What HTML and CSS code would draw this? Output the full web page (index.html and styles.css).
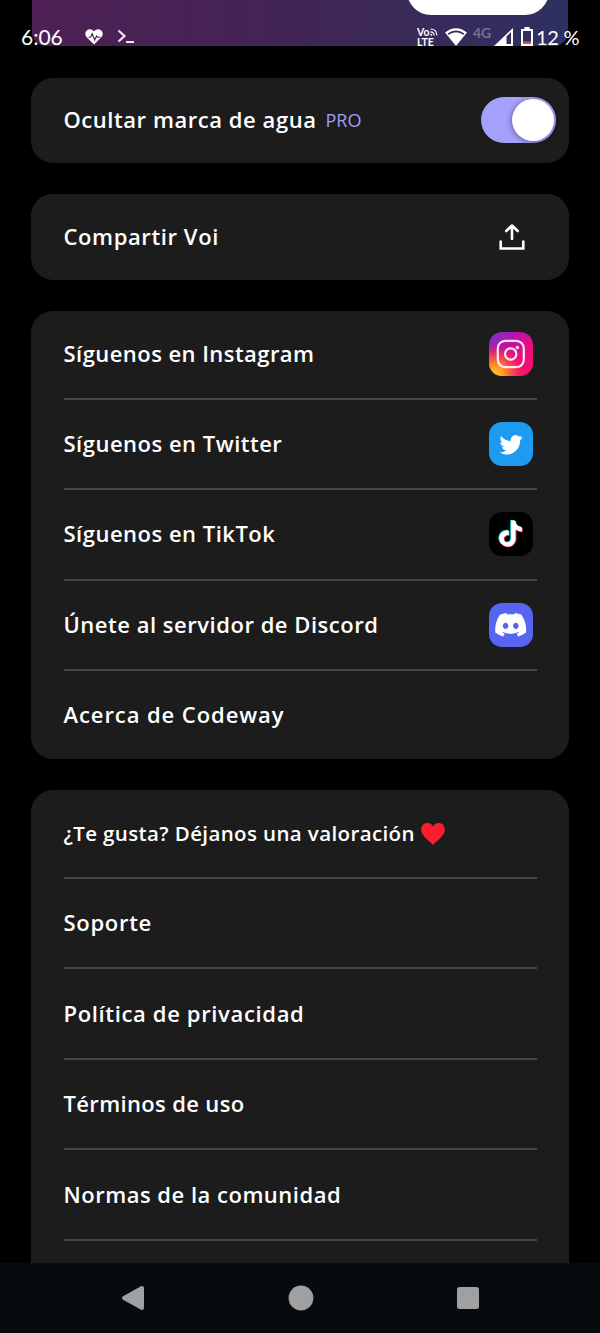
FILE: index.html
```html
<!DOCTYPE html>
<html lang="es">
<head>
<meta charset="utf-8">
<title>Ajustes</title>
<link rel="stylesheet" href="styles.css">
</head>
<body>
<div class="screen">
  <header class="status">
    <span class="clock">6:06</span>
    <svg class="heart-rate" width="18" height="16" viewBox="0 0 18 16"><path fill="#fff" d="M9 15.5 1.500 8C-.3 5.800 0 3 1.800 1.400 4-.4 7 0 9 2.400c2-2.400 5-2.800 7.200-1C18 3 18.300 5.800 16.500 8z"/><path fill="none" stroke="#48204f" stroke-width="1.100" d="M3.500 8.200h2l1.700-3.500 2.500 6.300 1.800-4 1 1.200h3"/></svg>
    <svg class="prompt" width="18" height="15" viewBox="0 0 18 15"><path fill="none" stroke="#f3e6f5" stroke-width="2.200" d="m1.500 1.500 6 5.500-6 5.500M9 13h8"/></svg>
    <div class="status-right">
      <span class="volte"><span class="vo">Vo<svg width="8" height="8" viewBox="0 0 8 8"><path fill="none" stroke="#fff" stroke-width="1.200" d="M.5 1Q6.500 1 7 7.500M.5 3.800Q4 4 4.300 7.500"/><circle cx="1.300" cy="6.800" r="1" fill="#fff"/></svg></span><span>LTE</span></span>
      <svg class="wifi" width="22" height="18" viewBox="0 0 22 18"><path fill="#fff" d="M0 4.500Q11-4 22 4.500L11 18z"/><path fill="none" stroke="#3c2859" stroke-width="1.600" d="M3 6.200q8-5.600 16 0"/></svg>
      <span class="net">4G</span>
      <svg class="signal" width="19" height="18" viewBox="0 0 19 18"><path fill="#fff" d="M19 0v18H0z"/><path fill="#343059" d="M12.500 8.500 17 4v12h-4.500z"/></svg>
      <svg class="battery" width="12" height="19" viewBox="0 0 12 19"><path fill="#fff" d="M3.500 0h5v2H12v17H0V2h3.500z"/><path fill="#343059" d="M2 4h8v11H2z"/><path fill="#d5524e" d="M2 14.500h8V17H2z"/></svg>
      <span class="percent">12 %</span>
    </div>
  </header>

  <main class="content">
    <section class="banner"><div class="banner-button"></div></section>

    <section class="card single">
      <span class="label l-hide">Ocultar marca de agua</span><span class="pro">PRO</span>
      <div class="toggle"><div class="knob"></div></div>
    </section>

    <section class="card single">
      <span class="label l-share">Compartir Voi</span>
      <svg class="share" width="26" height="26" viewBox="0 0 26 26"><path fill="none" stroke="#fff" stroke-width="2.600" stroke-linecap="round" stroke-linejoin="round" d="M13 15V2M7.300 7 13 1.500 18.700 7"/><path fill="none" stroke="#fff" stroke-width="2.600" stroke-linecap="round" d="M1.700 17.500v7h22.600v-7"/></svg>
    </section>

    <section class="card list">
      <div class="row"><span class="label l-insta">Síguenos en Instagram</span>
        <svg class="app" viewBox="0 0 44 44"><defs>
          <linearGradient id="ig" x1="0" y1="0" x2="1" y2="1"><stop offset="0" stop-color="#7038d0"/><stop offset=".32" stop-color="#b414ae"/><stop offset=".65" stop-color="#f00a80"/><stop offset="1" stop-color="#f51467"/></linearGradient>
          <radialGradient id="igw" cx=".12" cy="1" r=".75"><stop offset="0" stop-color="#ffd02e"/><stop offset=".3" stop-color="#ff9b20"/><stop offset=".65" stop-color="#ff4546" stop-opacity=".75"/><stop offset="1" stop-color="#ff1060" stop-opacity="0"/></radialGradient></defs>
          <rect width="44" height="44" rx="13" fill="url(#ig)"/><rect width="44" height="44" rx="13" fill="url(#igw)"/>
          <g fill="none" stroke="#ffe9f5" stroke-width="2.200"><rect x="8.800" y="8.900" width="26" height="26.200" rx="7.500"/><circle cx="21.700" cy="22" r="5.700"/></g><circle cx="28.400" cy="15.500" r="1.700" fill="#ffe9f5"/></svg>
      </div>
      <div class="row"><span class="label l-twitter">Síguenos en Twitter</span>
        <svg class="app" viewBox="0 0 44 44"><rect width="44" height="44" rx="13" fill="#1d9bf0"/><path transform="translate(10.500 10.800) scale(.96 1)" fill="#fff" d="M23.953 4.570a10 10 0 01-2.825.775 4.958 4.958 0 002.163-2.723c-.951.555-2.005.959-3.127 1.184a4.920 4.920 0 00-8.384 4.482C7.690 8.095 4.067 6.130 1.640 3.162a4.822 4.822 0 00-.666 2.475c0 1.710.870 3.213 2.188 4.096a4.904 4.904 0 01-2.228-.616v.060a4.923 4.923 0 003.946 4.827 4.996 4.996 0 01-2.212.085 4.936 4.936 0 004.604 3.417 9.867 9.867 0 01-6.102 2.105c-.390 0-.779-.023-1.170-.067a13.995 13.995 0 007.557 2.209c9.053 0 13.998-7.496 13.998-13.985 0-.210 0-.420-.015-.630A9.935 9.935 0 0024 4.590z"/></svg>
      </div>
      <div class="row"><span class="label l-tiktok">Síguenos en TikTok</span>
        <svg class="app" viewBox="0 0 44 44"><defs><path id="note" d="M12.525.020c1.310-.020 2.610-.010 3.910-.020.080 1.530.630 3.090 1.750 4.170 1.120 1.110 2.700 1.620 4.240 1.790v4.030c-1.440-.050-2.890-.350-4.200-.970-.570-.260-1.100-.590-1.620-.930-.010 2.920.010 5.840-.020 8.750-.080 1.400-.540 2.790-1.350 3.940-1.310 1.920-3.580 3.170-5.910 3.210-1.430.080-2.860-.310-4.080-1.030-2.020-1.190-3.440-3.370-3.650-5.710-.020-.500-.030-1-.010-1.490.180-1.900 1.120-3.720 2.580-4.960 1.660-1.440 3.980-2.130 6.150-1.720.020 1.480-.040 2.960-.040 4.440-.990-.320-2.150-.230-3.020.370-.630.410-1.110 1.040-1.360 1.750-.210.510-.150 1.070-.140 1.610.240 1.640 1.820 3.020 3.500 2.870 1.120-.010 2.190-.660 2.770-1.610.190-.330.400-.670.410-1.060.100-1.790.060-3.570.070-5.360.010-4.030-.010-8.050.020-12.070z"/></defs>
          <rect width="44" height="44" rx="13" fill="#000"/>
          <use href="#note" transform="translate(7.800 8) scale(1.080)" fill="#25f4ee"/><use href="#note" transform="translate(9.500 9.400) scale(1.080)" fill="#fe2c55"/><use href="#note" transform="translate(8.700 8.700) scale(1.080)" fill="#fff"/></svg>
      </div>
      <div class="row"><span class="label l-discord">Únete al servidor de Discord</span>
        <svg class="app" viewBox="0 0 44 44"><rect width="44" height="44" rx="13" fill="#5865f2"/><g transform="translate(6.200 6.200) scale(1.290)" fill="#fff"><path d="M20.317 4.3698a19.7913 19.7913 0 00-4.8851-1.5152.0741.0741 0 00-.0785.0371c-.211.3753-.4447.8648-.6083 1.2495-1.8447-.2762-3.68-.2762-5.4868 0-.1636-.3933-.4058-.8742-.6177-1.2495a.077.077 0 00-.0785-.037 19.7363 19.7363 0 00-4.8852 1.515.0699.0699 0 00-.0321.0277C.5334 9.0458-.319 13.5799.0992 18.0578a.0824.0824 0 00.0312.0561c2.0528 1.5076 4.0413 2.4228 5.9929 3.0294a.0777.0777 0 00.0842-.0276c.4616-.6304.8731-1.2952 1.226-1.9942a.076.076 0 00-.0416-.1057c-.6528-.2476-1.2743-.5495-1.8722-.8923a.077.077 0 01-.0076-.1277c.1258-.0943.2517-.1923.3718-.2914a.0743.0743 0 01.0776-.0105c3.9278 1.7933 8.18 1.7933 12.0614 0a.0739.0739 0 01.0785.0095c.1202.099.246.1981.3728.2924a.077.077 0 01-.0066.1276 12.2986 12.2986 0 01-1.873.8914.0766.0766 0 00-.0407.1067c.3604.698.7719 1.3628 1.225 1.9932a.076.076 0 00.0842.0286c1.961-.6067 3.9495-1.5219 6.0023-3.0294a.077.077 0 00.0313-.0552c.5004-5.177-.8382-9.6739-3.5485-13.6604a.061.061 0 00-.0312-.0286zM8.02 15.3312c-1.1825 0-2.1569-1.0857-2.1569-2.419 0-1.3332.9555-2.4189 2.157-2.4189 1.2108 0 2.1757 1.0952 2.1568 2.419 0 1.3332-.9555 2.4189-2.1569 2.4189zm7.9748 0c-1.1825 0-2.1569-1.0857-2.1569-2.419 0-1.3332.9554-2.4189 2.1569-2.4189 1.2108 0 2.1757 1.0952 2.1568 2.419 0 1.3332-.946 2.4189-2.1568 2.4189Z"/></g></svg>
      </div>
      <div class="row"><span class="label l-about">Acerca de Codeway</span></div>
    </section>

    <section class="card list more">
      <div class="row"><span class="label small l-rate">¿Te gusta? Déjanos una valoración</span><svg class="heart" width="24" height="22" viewBox="0 0 24 22"><path fill="#fb1f2d" d="M12 22C9.500 19 1.500 13.500.400 8.500-.600 3.500 2.500.100 6.300.100 9 .100 11 1.500 12 3.700 13 1.500 15 .100 17.700.100c3.800 0 6.900 3.400 5.900 8.400C22.500 13.500 14.500 19 12 22z"/></svg></div>
      <div class="row"><span class="label l-support">Soporte</span></div>
      <div class="row"><span class="label l-privacy">Política de privacidad</span></div>
      <div class="row"><span class="label l-terms">Términos de uso</span></div>
      <div class="row"><span class="label l-rules">Normas de la comunidad</span></div>
      <div class="row"></div>
    </section>
  </main>

  <nav class="navbar">
    <svg width="24" height="26" viewBox="0 0 24 26"><path fill="#9fa0a1" stroke="#9fa0a1" stroke-width="4" stroke-linejoin="round" d="M21 3v20L3 13z"/></svg>
    <svg width="26" height="26" viewBox="0 0 26 26"><circle cx="13" cy="13" r="12.400" fill="#9fa0a1"/></svg>
    <svg width="24" height="24" viewBox="0 0 24 24"><rect x="1" y="1" width="22" height="22" rx="2.500" fill="#9fa0a1"/></svg>
  </nav>
</div>
</body>
</html>
```

FILE: styles.css
```css
* { box-sizing: border-box; }
body { margin: 0; background: #000; color: #fff; font-family: "Open Sans", "Noto Sans", sans-serif; }
svg { display: block; flex: none; }
.screen { position: relative; display: flex; flex-direction: column; width: 600px; height: 1333px; overflow: hidden; }

.status { position: absolute; z-index: 2; top: 0; left: 0; display: flex; align-items: center; width: 600px; height: 73px; padding: 0 22px 0 21px; font-family: Lato, sans-serif; font-size: 20px; line-height: 24px; }
.clock { width: 64px; font-size: 21px; }
.prompt { margin-left: 14px; }
.status-right { display: flex; align-items: center; margin-left: auto; }
.volte { display: flex; flex-direction: column; width: 28px; font-size: 10.5px; font-weight: 700; line-height: 10px; }
.vo { display: flex; align-items: center; }
.net { width: 27px; padding-left: 6px; margin-top: -8px; color: #77708f; font-size: 14px; font-weight: 700; line-height: 16px; }
.signal { margin-right: 8px; }
.percent { width: 42px; margin-left: 3px; letter-spacing: -.3px; white-space: nowrap; }

.content { flex: 1; min-height: 0; overflow: hidden; padding: 0 31px; }
.banner { display: flex; justify-content: flex-end; align-items: flex-end; height: 46px; margin: 0 1px 31.5px; padding: 0 19px 31px 0; border-radius: 0 0 14px 14px; background: linear-gradient(90deg, #4f2055, #412554 50%, #2e3061); }
.banner-button { flex: none; width: 142px; height: 48px; border-radius: 24px; background: #fff; }

.card { margin-bottom: 31.3px; padding: 0 32px 0 32.5px; border-radius: 22px; background: #1c1c1c; }
.single { display: flex; align-items: center; height: 85.5px; }
.label { padding-bottom: 2px; font-size: 22px; font-weight: 650; line-height: 30px; letter-spacing: .5px; white-space: nowrap; }
.small { padding-bottom: 1px; font-size: 20.5px; }
.pro { margin-left: 8px; color: #a39df5; font-size: 18px; line-height: 24px; }
.toggle { display: flex; justify-content: flex-end; align-items: center; width: 75px; height: 46px; margin: 0 -18.5px 0 auto; padding-right: 2px; border-radius: 23px; background: #a5a0fb; }
.knob { width: 42px; height: 42px; border-radius: 50%; background: #fff; box-shadow: -1px 1px 5px rgba(30, 20, 80, .45); }
.share { margin: 0 12.5px 0 auto; }

.row { display: flex; align-items: center; height: 90.5px; border-bottom: 2px solid #464648; }
.row:first-child { height: 88.5px; }
.row:last-child { height: 88px; border-bottom: 0; }
.app { width: 44px; height: 44px; margin: 0 4px 0 auto; }
.heart { margin-left: 6px; }

.l-hide { width: 254px; letter-spacing: .55px; }
.l-share { letter-spacing: .6px; }
.l-insta { letter-spacing: .45px; }
.l-discord { letter-spacing: .52px; }
.l-about { letter-spacing: .92px; }
.l-rate { letter-spacing: .38px; }
.l-support { letter-spacing: .7px; }
.l-privacy { letter-spacing: .65px; }
.l-terms { letter-spacing: .35px; }

.navbar { display: flex; justify-content: space-between; align-items: center; height: 70px; padding: 0 120px 0 121px; background: #080b0e; }
```
